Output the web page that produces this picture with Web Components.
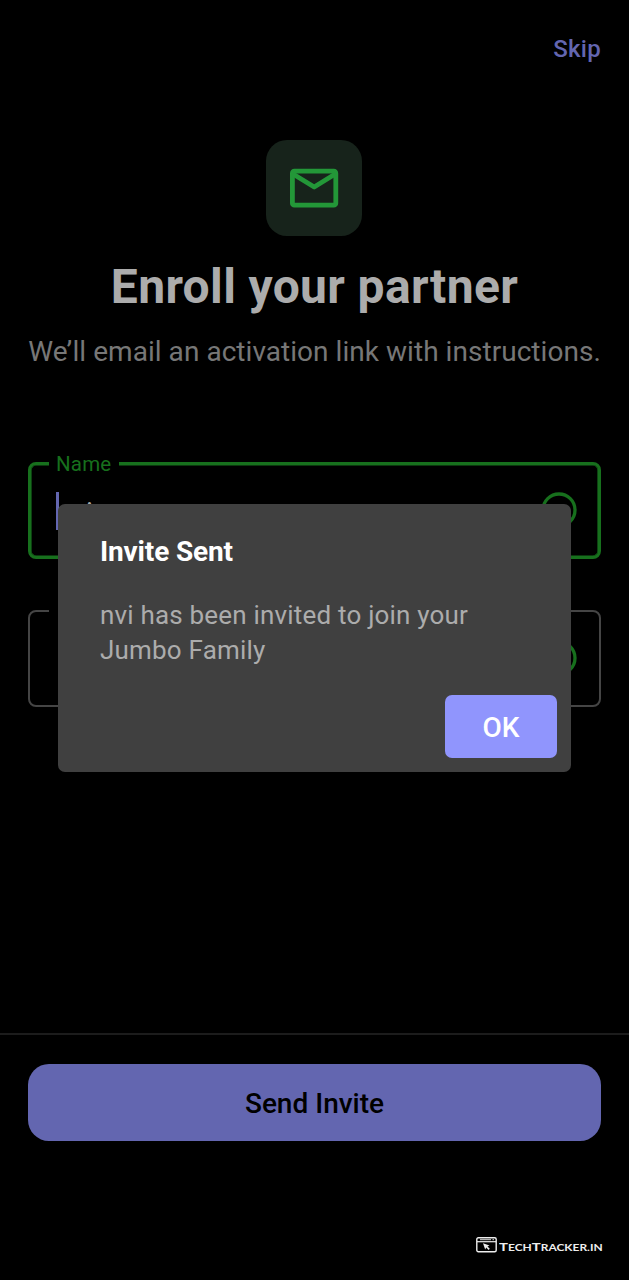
<!DOCTYPE html>
<html lang="en">
<head>
<meta charset="utf-8">
<title>Enroll your partner</title>
<style>
html,body{margin:0;background:#000}
body{font-family:Roboto,"Liberation Sans",sans-serif}
</style>
</head>
<body>
<enroll-page></enroll-page>
<script>
const define=(name,html)=>customElements.define(name,class extends HTMLElement{
  constructor(){
    super();
    const t=document.createElement('template');
    t.innerHTML=html;
    this.attachShadow({mode:'open'}).append(t.content.cloneNode(true));
  }
});

define('skip-link',`<style>
:host{display:block;text-align:right;font-size:24px;line-height:30px;font-weight:500;color:#6366b0;letter-spacing:.3px}
</style><slot></slot>`);

define('mail-badge',`<style>
:host{display:flex;align-items:center;justify-content:center;width:96px;height:96px;border-radius:21px;background:#17231b}
svg{display:block}
</style><svg width="50" height="40" viewBox="0 0 50 40" fill="none" stroke="#239738" stroke-width="4.8" stroke-linejoin="round"><rect x="3.4" y="3.2" width="43.4" height="34" rx="2"/><path d="M4 6L25.2 19L46.2 6"/></svg>`);

define('page-heading',`<style>
:host{display:flex;flex-direction:column;align-items:center;white-space:nowrap}
h1{margin:0;font-size:48px;line-height:56px;font-weight:700;color:#acacac;letter-spacing:.36px}
p{margin:20px 0 0;font-size:28px;line-height:34px;color:#777;letter-spacing:.04px}
</style><h1><slot name="title"></slot></h1><p><slot></slot></p>`);

define('outlined-field',`<style>
:host{--line:#454545;--w:2px;display:block;box-sizing:border-box;height:97px}
fieldset{margin:0;padding:0 calc(24.5px - var(--w)) 0 calc(28px - var(--w));min-width:0;box-sizing:border-box;height:100%;border:var(--w) solid var(--line);border-radius:8px;display:flex;align-items:center;justify-content:space-between}
.wrap{position:relative;height:100%}
.gap{position:absolute;left:21px;top:-9px;height:22px;padding:0 7px;min-width:56px;background:#000;color:#17701d;font-size:20.5px;line-height:22px;letter-spacing:.2px}
.value{display:flex;align-items:center;font-size:28px;color:#acacac}
.text{padding-top:3px}
.caret{width:3px;height:38px;margin-right:-2px}
svg{margin-bottom:2px}
:host([focused]) .caret{background:#6366b0}
:host([focused]){--line:#17701d;--w:3px}
:host([focused]) fieldset{box-shadow:inset 0 0 0 .6px var(--line)}
</style><div class="wrap"><fieldset><span class="value"><i class="caret"></i><span class="text"><slot></slot></span></span>
<svg width="36" height="36" viewBox="0 0 36 36" fill="none" stroke="#17701d" stroke-width="3.3"><circle cx="18" cy="18" r="16"/><path d="M10 19.500l5.400 5.400L25 15.500"/></svg></fieldset><span class="gap"><slot name="label"></slot></span></div>`);

define('primary-button',`<style>
:host{display:block}
button{display:block;width:100%;height:77px;border:0;border-radius:21px;padding:2px 0 0;background:#6366b0;color:#000;font:500 28px/34px Roboto,sans-serif}
</style><button><slot></slot></button>`);

define('site-mark',`<style>
:host{display:flex;align-items:flex-start;color:#eee;gap:2px}
span{display:block;font:700 9.3px/16px Lato,sans-serif;white-space:nowrap;width:103px;padding-top:2px}
b{display:inline-block;font-weight:700;transform:scaleX(1.285);transform-origin:0 50%}
::slotted(big){font-size:11.6px}
svg{flex:none}
</style><svg width="21" height="16" viewBox="0 0 21 16"><rect x=".8" y=".8" width="19.4" height="14" rx="1.5" fill="none" stroke="currentColor" stroke-width="1.4"/><path d="M1 4.7h19" stroke="currentColor" stroke-width="1.2"/><path d="M4 2.7h11M16.5 2.7h1.5" stroke="currentColor" stroke-width=".9"/><path d="M7 6.2l6.5 2.2-2 1 2.3 2.4-1.2 1.2-2.4-2.4-1 1.8z" fill="currentColor"/></svg><span><b><slot></slot></b></span>`);

define('alert-dialog',`<style>
:host{display:flex;flex-direction:column;box-sizing:border-box;padding:31px 14px 14px 42px;border-radius:7px;background:#404040}
h2{margin:0;font-size:28px;line-height:34px;font-weight:700;color:#fff;letter-spacing:-.15px}
p{margin:29px 0 0;font-size:26px;line-height:35px;color:#acacac;letter-spacing:.19px}
button{align-self:flex-end;margin-top:auto;width:112px;height:63px;border:0;border-radius:7px;padding:2px 0 0;background:#9095fd;color:#fff;font:500 28px/34px Roboto,sans-serif}
</style><h2><slot name="title"></slot></h2><p><slot></slot></p><button><slot name="action"></slot></button>`);

define('enroll-page',`<style>
:host{position:relative;display:flex;flex-direction:column;box-sizing:border-box;width:629px;height:1280px;overflow:hidden;background:#000}
skip-link{margin:34px 28px 0}
mail-badge{align-self:center;margin:76px 1px 0 0}
page-heading{margin-top:23px}
.fields{display:flex;flex-direction:column;gap:51px;padding:0 28px;margin-top:93px}
footer{margin-top:auto;height:247px;box-sizing:border-box;border-top:2px solid #1c1c1c;padding:29px 28px 0;display:flex;flex-direction:column}
site-mark{align-self:flex-end;margin:96px -1px 0 0}
alert-dialog{position:absolute;left:58px;top:504px;width:513px;height:268px}
</style>
<skip-link>Skip</skip-link>
<mail-badge></mail-badge>
<page-heading><span slot="title">Enroll your partner</span>We’ll email an activation link with instructions.</page-heading>
<div class="fields"><outlined-field focused><span slot="label">Name</span>nvi</outlined-field><outlined-field></outlined-field></div>
<footer><primary-button>Send Invite</primary-button><site-mark><big>T</big>ECH<big>T</big>RACKER.IN</site-mark></footer>
<alert-dialog><span slot="title">Invite Sent</span>nvi has been invited to join your<br>Jumbo Family<span slot="action">OK</span></alert-dialog>`);
</script>
</body>
</html>
